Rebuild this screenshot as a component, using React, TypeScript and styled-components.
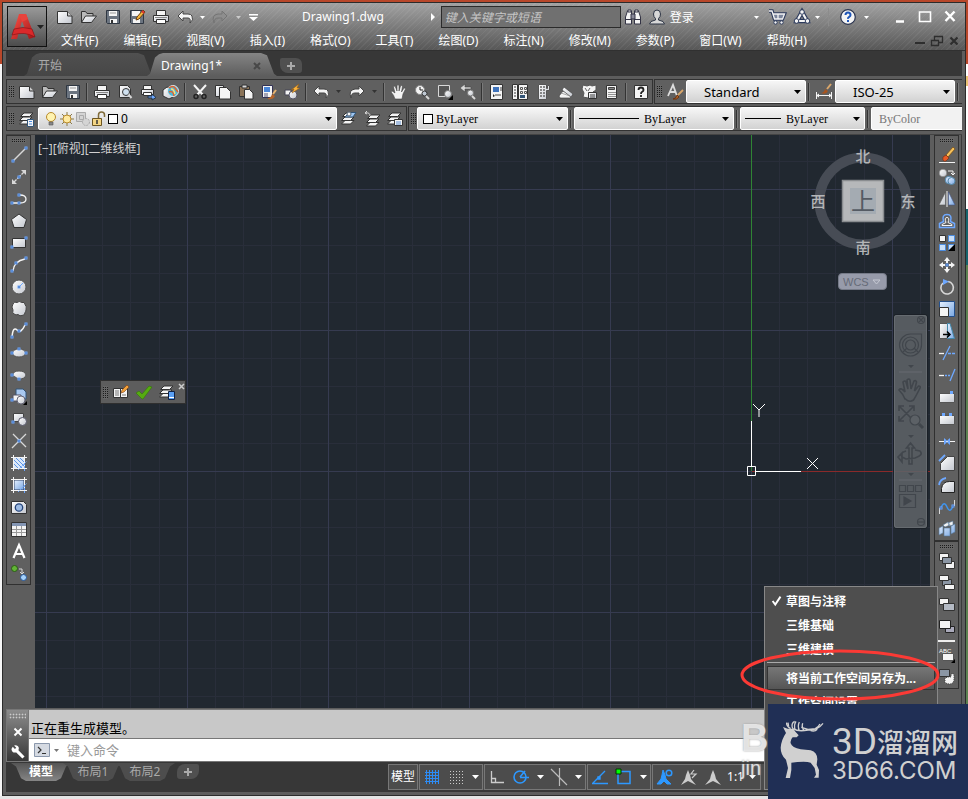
import React from "react";
import styled, { createGlobalStyle, css } from "styled-components";

const sans = `"Noto Sans", "Noto Sans CJK SC", sans-serif`;

const GlobalStyle = createGlobalStyle`
  *, *::before, *::after { box-sizing: border-box; }
  body { margin: 0; font-family: ${sans}; font-size: 12px; }
  button { margin: 0; padding: 0; border: 0; background: none; color: inherit; font: inherit; }
  input, select { margin: 0; font: inherit; }
  svg { display: block; flex: none; }
`;

/* ---------- drawing helpers ---------- */

const W = "#f4f4f4";
const L = "#d8d8d8";
const D = "#333";
const B = "#6ea8ff";
const G = "url(#face)";
const BG = "url(#blueFace)";

const Node = ({ x, y }: { x: number; y: number }) => (
  <rect x={x - 1} y={y - 1} width="2" height="2" fill="#24406e" stroke={B} />
);
const Stack = () => (
  <g fill={W} stroke={D}>
    <path d="M4 9.500h9l-3.500 3.500h-9z" />
    <path d="M4 6h9l-3.500 3.500h-9z" />
    <path d="M5 2h9l-3.500 3.500h-9z" />
  </g>
);

const icons: Record<string, React.ReactNode> = {
  new: <g><path d="M.5 2.500h10l4.500 4.500v7.500h-14.500z" fill={G} stroke={D} /><path d="M10.500 2.500v4.500h4.500" fill="#ccc" stroke={D} /></g>,
  open: <g stroke={D}><path d="M.5 13.500v-11h4l1.500 2h6v3" fill="#bbb" /><path d="M.5 13.500l4-6.500h11l-5 6.500z" fill={G} /></g>,
  save: <g><path d="M1.500 1.500h13v13h-12l-1-1z" fill="#6b7480" stroke="#2f3742" /><path d="M4 2h8v5H4zM5 10h7v4H5z" fill={W} /><path d="M6 11h2v3H6z" fill="#333" /><path d="M5 4h6" stroke="#999" /></g>,
  saveAs: <g><path d="M1.500 1.500h13v13h-12l-1-1z" fill="#6b7480" stroke="#2f3742" /><path d="M3 2h8v5H3zM4 10h7v4H4z" fill={W} /><path d="M7 11l1-3 6-7 2 2-6 7z" fill="#f5b63c" stroke="#6b3d10" /><path d="M13 2l2 2" stroke="#d33" strokeWidth="2" /></g>,
  print: <g stroke={D}><path d="M3.500 1.500h9v5h-9z" fill={W} /><path d="M.5 6.500h15v6h-15z" fill={G} /><path d="M3.500 10.500h9v4h-9z" fill="#fff" /><path d="M2 8.500h12" stroke="#888" /></g>,
  preview: <g><path d="M2.500 1.500h8l3 3v9h-11z" fill={G} stroke={D} /><circle cx="9" cy="8" r="3.500" fill="#cfe0ef" stroke={D} /><path d="M11.500 10.500l3 3.500" stroke={L} strokeWidth="2" /></g>,
  publish: <g stroke={D}><path d="M3.500 1.500h8v4h-8z" fill={W} /><path d="M1.500 5.500h12v5h-12z" fill={G} /><path d="M3.500 8.500h8v3h-8z" fill="#fff" /><path d="M8 12h4v-2l4 3.500-4 2.500v-2H8z" fill={B} stroke="#234" /></g>,
  globe: <g><path d="M0 6l4-3 6 2v8l-4 2-6-3z" fill={G} stroke={D} /><circle cx="10" cy="7" r="5.500" fill="#4db8d8" stroke="#e8e8e8" /><path d="M6 4q4-3 6 0t3 4M6 8q4-2 5 4" fill="none" stroke="#e2632f" strokeWidth="1.500" /><path d="M8 5q3 0 4 5" fill="none" stroke="#ffe070" strokeWidth="1.500" /></g>,
  cut: <g fill="none" strokeWidth="1.500"><path d="M2 1l9 10M14 1L5 11" stroke={W} strokeWidth="2" /><circle cx="4" cy="12.500" r="2" stroke="#222" /><circle cx="12" cy="12.500" r="2" stroke="#222" /></g>,
  copy: <g><path d="M.5 1.500h8v11h-8z" fill={G} stroke={D} /><path d="M4.500 3.500h7l4 4v7.500h-11z" fill={W} stroke={D} /></g>,
  paste: <g><path d="M1.500 2.500h10v10h-10z" fill="#8a7358" stroke={D} /><path d="M4 1h5v3H4z" fill={L} stroke={D} /><path d="M6.500 5.500h5l3.500 3.500v6h-8.500z" fill={W} stroke={D} /></g>,
  match: <g><path d="M1.500 1.500h10v12h-10z" fill={W} stroke="#335" /><path d="M3 3h6v5H3z" fill="#4a86d8" /><path d="M3 10h4M3 12h4" stroke="#557" /><path d="M7 14q3 0 4-4l3 2q-2 4-7 3z" fill="#b5652a" /><path d="M12 10l3-4" stroke="#e8b36e" strokeWidth="2" /></g>,
  block: <g><path d="M1 6h6v5H1z" fill={W} stroke="#445" /><circle cx="9" cy="11" r="4" fill={G} stroke="#556" /><path d="M7 6l8-6-2 4h3l-8 5 2-4z" fill="#f9b23c" stroke="#8a5510" strokeWidth=".5" /></g>,
  undo: <path d="M6 2L1 7l5 5V9h5q3 0 2 5 4-3 2-7-1-2-4-2H6z" fill={W} stroke="#444" />,
  redo: <path d="M10 2l5 5-5 5V9H6Q2 9 2 14q-3-8 4-9h4z" fill={W} stroke="#444" />,
  redoDim: <path d="M10 2l5 5-5 5V9H6Q2 9 2 14q-3-8 4-9h4z" fill="#8e8e8e" stroke="#747474" />,
  hand: <path d="M4 15Q3 11 0 8q1-2 4 1L2.500 3q1-1.500 2 0L6 7V1.500q1-1.500 2 0V7l1.500-5q1-1 2 .5L10.500 8 13 4q1.500-.5 1.500 1L12 10l-1 5z" fill={W} stroke="#444" strokeWidth=".6" />,
  zoomTime: <g><circle cx="6" cy="6" r="4.500" fill={W} stroke="#888" /><path d="M6 3v3h3" fill="none" stroke="#222" /><circle cx="10.500" cy="9.500" r="2.500" fill="#bfc8d2" stroke={D} /><path d="M12 12l3 3" stroke={L} strokeWidth="2" /></g>,
  zoomWin: <g><path d="M1.500 1.500h11v11h-11z" fill="#555" stroke={L} /><circle cx="11" cy="10" r="3.500" fill={G} stroke="#777" /><path d="M16 16v-5l-5 5z" fill="#000" /></g>,
  zoomPrev: <g><path d="M0 4l5-4v3h6v2H5v3z" fill={L} stroke="#444" strokeWidth=".6" /><circle cx="10.500" cy="9" r="3" fill={G} stroke="#777" /><path d="M12 12l3 3" stroke={L} strokeWidth="2" /></g>,
  props: <g><path d="M1.500.5h12v15h-12z" fill={W} stroke={D} /><path d="M4 3h6v5H4z" fill="#3f73bb" /><path d="M11 4h2M11 6h2M6 11h6" stroke="#444" /><path d="M4 10l2 2-2 1z" fill="#222" /></g>,
  design: <g><path d="M.5.5h5v15h-5zM6.500.5h9v15h-9z" fill={W} stroke={D} /><path d="M2 3h2M2 6h2M2 9h2M2 12h2" stroke="#777" strokeWidth="1.500" /><path d="M8.500 3.500h2v2h-2zM12.500 3.500h2v2h-2zM8.500 7.500h2v2h-2zM12.500 7.500h2v2h-2z" fill="none" stroke="#555" /><path d="M8 11h5v3H8z" fill="#357" /></g>,
  palette: <g><path d="M3.500.5h8v4h1v-3h2v5h-3v9h-8z" fill={G} stroke="#555" /><path d="M5 3h6M5 6h6M5 9h6M5 12h6" stroke="#666" strokeDasharray="2 1" strokeWidth="1.500" /></g>,
  sheets: <g stroke="#444" strokeWidth=".7"><path d="M1 12l4-5 10 4-3 3H2z" fill={W} /><path d="M4 6l2-3 9 7-2 3z" fill={G} /><path d="M3 9l9 3" stroke="#888" /></g>,
  markup: <g><path d="M1 5l1-4 4 1 3-1 2 1 4-1v5l-3 2-2 4-3 2-5-1 1-4z" fill={W} stroke="#555" /><path d="M4 4l2 3M9 4L7 7" stroke="#666" /><path d="M7.500 8.500h8v6h-8z" fill={G} stroke={D} /><path d="M9 11h5M9 13h5" stroke="#444" /></g>,
  calc: <g><path d="M2.500 1.500h10v13h-10z" fill={W} stroke={D} /><path d="M4.500 3.500h6v2h-6z" fill="#888" stroke="#444" /><path d="M4.500 8.500h7M4.500 10.500h7M4.500 12.500h7" stroke="#333" strokeDasharray="1 1" /></g>,
  help: <g><path d="M1.500 1.500h13v13h-13z" fill={W} stroke={D} /><path d="M5.500 6q0-2.500 2.500-2.500T10.500 6q0 1-1.300 1.800T8 10M8 11v2" fill="none" stroke="#222" strokeWidth="1.800" /></g>,
  layers: <g><Stack /><path d="M8.500 8.500h6v7h-6z" fill={W} stroke="#357" /><path d="M10 10h3v1h-3zM10 12.500h3v1h-3z" fill="#4a8ae0" /></g>,
  layerTop: <g><Stack /><path d="M6 4l3-2.500h6L12 6H4z" fill="#9cc4f0" stroke="#357" /><circle cx="8" cy="3" r="2" fill={W} stroke="#567" /></g>,
  layerPrev: <g transform="translate(2 2)"><Stack /><path d="M4 3Q4-1-1 0M-1 0l2-2M-1 0l2 1" fill="none" stroke={L} /></g>,
  layerState: <g><Stack /><path d="M7.500 8.500h8v6h-8z" fill={W} stroke={D} /><path d="M9 11h5M9 13h5" stroke="#5a8acc" /></g>,
  bulb: <g><circle cx="8" cy="6" r="4.500" fill="#fff3b0" stroke="#b98a2b" /><path d="M6 11h4v3H6z" fill="#888" stroke="#555" strokeWidth=".6" /></g>,
  sun: <g><path d="M8 1v14M1 8h14M3 3l10 10M13 3L3 13" stroke="#8a7a48" /><circle cx="8" cy="8" r="4" fill="#ffeaa0" stroke="#b98a2b" /></g>,
  freeze: <g fill="#d4d4d4" stroke="#aaa"><path d="M1.500 1.500h9v9h-9z" /><path d="M4.500 4.500h4v4h-4z" /><circle cx="11" cy="11" r="3.500" strokeDasharray="2 1" /></g>,
  lock: <g><path d="M7.500 8V4q0-3 3-3t3 3v2" fill="none" stroke="#806c3a" strokeWidth="1.500" /><path d="M1.500 7.500h9v7h-9z" fill="#f3d585" stroke="#6c5520" /><path d="M6 9v4" stroke="#333" strokeWidth="1.500" /></g>,
  textStyle: <g><path d="M1 12L6 1l4 11M3 8h6" fill="none" stroke="#ddd" strokeWidth="1.800" /><path d="M6 15q3 0 4-4l2 2q-2 3-6 2z" fill="#b5652a" stroke="#6b3310" /><path d="M11 11l5-5" stroke="#dba76a" strokeWidth="1.800" /></g>,
  dimStyle: <g><path d="M.5 8v7M15.500 8v7M1 11.500h14" stroke={W} /><path d="M0 11.500l3-2v4zM16 11.500l-3-2v4z" fill={W} /><path d="M5 9q3 0 4-4l3 2q-2 4-7 2z" fill="#a8541e" /><path d="M11 5l4-5" stroke="#dba76a" strokeWidth="2" /></g>,

  line: <g><path d="M2 14L14 2" stroke={L} strokeWidth="1.500" /><Node x={2} y={14} /><Node x={15} y={1} /></g>,
  xline: <g><path d="M2 14L14 2" stroke={L} strokeWidth="1.300" strokeDasharray="5 1" /><path d="M10 1h5v5zM1 10v5h5z" fill={L} /><Node x={8} y={8} /></g>,
  pline: <g><path d="M1 12h8q6 0 6-4t-6-4" fill="none" stroke={W} strokeWidth="1.300" /><Node x={1} y={12} /><Node x={8} y={12} /><Node x={8} y={4} /></g>,
  polygon: <path d="M8 1l7.500 5.500L13 14.500H3L.5 6.500z" fill={G} stroke={D} />,
  rectangle: <g><path d="M1.500 3.500h13v9h-13z" fill={G} stroke={D} /><Node x={1} y={12} /><Node x={15} y={3} /></g>,
  arc: <g><path d="M2 14Q3 4 14 2" fill="none" stroke={W} strokeWidth="1.300" /><Node x={1} y={14} /><Node x={5} y={6} /><Node x={15} y={1} /></g>,
  circle: <g><circle cx="8" cy="8" r="7" fill={G} stroke="#555" /><path d="M8 8l4-4" stroke={B} /><Node x={8} y={8} /></g>,
  cloud: <path d="M2 3q1-3 4-1.500Q8-.5 11 1.500q3-1 3 2 2 2 1 5 0 2-1 3 0 3-3 3-2 1-4-1-2 1-4-.5-2-1-1-4-2-3 0-6z" fill={G} stroke="#444" />,
  spline: <g><path d="M1 14Q2 3 6 7t8-5" fill="none" stroke={W} strokeWidth="1.500" /><Node x={1} y={14} /><Node x={8} y={8} /><Node x={15} y={1} /></g>,
  ellipse: <g><ellipse cx="8" cy="8" rx="6.500" ry="4" fill={G} stroke="#555" /><Node x={1} y={8} /><Node x={15} y={8} /><Node x={8} y={4} /></g>,
  ellipseArc: <g><path d="M2 8q0-4 6-4t7 4q-1 4-7 4" fill={G} stroke="#555" /><Node x={1} y={8} /><Node x={8} y={12} /></g>,
  insert: <g><path d="M5 0h7l3 3v7H5z" fill="#a9c8ef" stroke="#357" /><path d="M2 6h8v6H2z" fill={W} stroke="#556" /><circle cx="10" cy="11" r="4" fill={G} stroke="#667" /><path d="M16 16v-4l-4 4z" fill="#000" /><Node x={1} y={11} /></g>,
  makeBlock: <g><path d="M2.500 2.500h10v8h-10z" fill={G} stroke="#444" /><circle cx="11.500" cy="10.500" r="4" fill={G} stroke="#556" /><Node x={2} y={11} /></g>,
  point: <g><path d="M2 1l13 13M1 15L15 1" stroke={L} strokeWidth="1.300" /><Node x={8} y={8} /></g>,
  hatch: <g><path d="M3 3h10v10H3z" fill="#dbe8fa" /><path d="M3 9l4 4M3 5l8 8M5 3l8 8M9 3l4 4" stroke="#5c94e4" /><path d="M2.500 0v16M0 2.500h16M13.500 0v16M0 13.500h16" stroke={W} /><path d="M7 15l9-9M13.500 8v8" stroke={B} strokeDasharray="2 1" /></g>,
  gradient: <g><path d="M3 3h10v10H3z" fill={BG} stroke="#346" /><path d="M2.500 0v16M0 2.500h16M13.500 0v16M0 13.500h16" stroke={W} /><path d="M7 15l9-9M13.500 8v8" stroke={B} strokeDasharray="2 1" /></g>,
  region: <g><path d="M.5 2.500h12l3 3v9H.5z" fill={G} stroke="#333" /><circle cx="8" cy="8.500" r="3.700" fill="#9dbbe4" stroke="#26457a" strokeWidth="1.300" /></g>,
  table: <g><path d="M.5 1.500h15v14H.5z" fill={W} stroke={D} /><path d="M1 2h14v3H1z" fill="#8496b4" /><path d="M1 8.500h14M1 11.500h14M5.500 5v10M10.500 5v10" stroke="#999" /></g>,
  mtext: <path d="M2.500 15L8 2l5.500 13M4.500 11h7" fill="none" stroke="#fff" strokeWidth="2.200" />,
  addSel: <g><circle cx="3.500" cy="3.500" r="3" fill="#62b536" stroke="#2b5c15" /><circle cx="12.500" cy="12.500" r="3" fill="#a6d2fb" stroke="#27589c" /><path d="M8 4h3v5M9 7l2 2 2-2" fill="none" stroke={L} /></g>,

  erase: <g><path d="M0 15.500h16" stroke={W} /><path d="M7 8l7-8 2 2-7 8z" fill="#f6c15b" stroke="#744a10" strokeWidth=".7" /><path d="M4 10l3-2 3 3-3 3q-4 1-3-4z" fill="#e85b25" stroke="#6b2a10" strokeWidth=".6" /></g>,
  copyObj: <g><circle cx="4" cy="4" r="3.800" fill={G} stroke="#777" strokeWidth=".6" /><circle cx="10" cy="11" r="3.800" fill={BG} stroke="#58a" /><circle cx="12.500" cy="12" r="3.500" fill={BG} stroke="#58a" /><path d="M9 2h5v4M12 4l2 2 2-2" fill="none" stroke={W} /></g>,
  mirror: <g><path d="M6.500 1v13H0z" fill={G} stroke="#555" strokeWidth=".6" /><path d="M9.500 1v13H16z" fill={BG} stroke="#458" strokeWidth=".6" /><path d="M8 0v16" stroke={W} /></g>,
  offset: <g fill="none"><path d="M.5 14.500v-4l4-2q-2-7 3.500-7t3.500 7l4 2v4z" stroke={B} strokeWidth="1.500" /><path d="M3 12.500v-1l4-2q-2-5 1-5t1 5l4 2v1z" stroke={W} /></g>,
  array: <g><path d="M.5.5h6v6h-6z" fill={W} stroke="#333" /><path d="M9.500.5h6v6h-6zM.5 9.500h6v6h-6zM9.500 9.500h6v6h-6z" fill="#c9dff9" stroke="#4b8ce0" /><path d="M16 16V9l-7 7z" fill="#000" /></g>,
  move: <g fill={W}><path d="M8 0l3 4H9v2H7V4H5zM8 16l3-4H9v-2H7v2H5zM0 8l4-3v2h2v2H4v2zM16 8l-4-3v2h-2v2h2v2z" /><Node x={8} y={8} /></g>,
  rotate: <g fill="none"><path d="M9 2.500a6.300 6.300 0 1 1-5 1.500" stroke={L} strokeWidth="1.600" /><path d="M4 0l6 2.500L4 6z" fill={B} /></g>,
  scale: <g><path d="M.5.5h15v15H.5z" fill={BG} stroke="#24508c" /><path d="M.5 6.500h9v9h-9z" fill={W} stroke="#333" /></g>,
  stretch: <g><path d="M.5.5h8v15h-8z" fill={G} stroke="#555" /><path d="M8.500.5H11l4.500 15h-7z" fill={BG} stroke="#48a" /><path d="M4 11.500h7M8 8.500l3 3-3 3" fill="none" stroke="#000" strokeWidth="1.500" /></g>,
  trim: <g strokeWidth="1.300"><path d="M0 8.500h5" stroke={W} /><path d="M4 15L11 1" stroke={B} /><path d="M9 8.500h7" stroke={B} strokeDasharray="3 1" /></g>,
  extend: <g strokeWidth="1.300"><path d="M0 8.500h5" stroke={W} /><path d="M6 8.500h5" stroke={B} strokeDasharray="2 1" /><path d="M11 14l5-12" stroke={B} /></g>,
  breakAt: <g><path d="M.5 4.500h15v9H.5z" fill={G} stroke="#555" /><path d="M11 2h3v3h-3z" fill={B} /></g>,
  breakObj: <g><path d="M.5 4.500h15v9H.5z" fill={G} stroke="#555" /><path d="M3 2h3v3H3zM10 2h3v3h-3z" fill={B} /></g>,
  join: <g><path d="M0 8.500h16" stroke={W} /><path d="M5 5l4 3.500L5 12zM11 5L7 8.500l4 3.500z" fill={B} /></g>,
  chamfer: <g><path d="M1.500 15.500v-7l7-7h7v14z" fill={G} stroke="#444" /><path d="M0 6l6-6" stroke={B} strokeWidth="1.800" /></g>,
  fillet: <g><path d="M2.500 15.500v-4q1-7 8-7h5v11z" fill={G} stroke="#222" /><path d="M0 8Q1 2 7 1" fill="none" stroke={B} strokeWidth="1.800" /></g>,
  blend: <g fill="none"><path d="M.5 15V9M15.500 7V1" stroke={L} /><path d="M2 9q3-8 6-1t6-1" stroke="#3f93ec" strokeWidth="1.500" /><Node x={2} y={9} /><Node x={14} y={7} /></g>,
  explode: <g stroke="#579" strokeWidth=".6"><path d="M0 7l4-2v7l-4 2zM5 7h6v8H5zM12 5l4-2v8l-4 2z" fill={BG} /><path d="M4 4l5-3 2 3-5 2zM9 2l5-2v4l-4 1z" fill={W} /></g>,
  front: <g stroke="#333"><path d="M.5.5h9v7h-9zM6.500 8.500h9v7h-9z" fill={W} /><path d="M3.500 4.500h9v6h-9z" fill="#8b96a4" /></g>,
  back: <g stroke="#333"><path d="M3.500 4.500h9v6h-9z" fill="#8b96a4" /><path d="M.5.5h9v5h-9zM5.500 9.500h10v5h-10z" fill={W} /></g>,
  above: <g stroke="#333"><path d="M.5 1.500h9v6h-9z" fill={W} /><path d="M4.500 6.500h11v7h-11z" fill="#b4bac4" /></g>,
  under: <g stroke="#222"><path d="M6.500 7.500h9v6h-9z" fill="#aab" /><path d="M.5 1.500h11v8H.5z" fill={W} /></g>,
  textFront: <g><path d="M3.500 6.500h11v7h-11z" fill={W} stroke="#555" /><text x="0" y="6" fontFamily="Liberation Sans" fontSize="6" fill="#fff">ABC</text><path d="M16 16v-4l-4 4z" fill="#000" /></g>,
  hatchBack: <g><path d="M.5.5h10v7h-10z" fill="#8b96a4" stroke="#333" /><path d="M6 14V9l3-1h3V5h3v5q0 5-5 5z" fill={W} stroke="#444" strokeDasharray="1 1" /></g>,

  refEdit: <g><path d="M.5 4.500h7v9h-7zM7.500 4.500h7v9h-7z" fill={W} stroke="#333" /><path d="M2 7h4M2 9h4M2 11h4M9 11h4" stroke="#777" /><path d="M8 9l1-3 5-5 2 2-5 5z" fill="#f2a23b" stroke="#7a3c10" strokeWidth=".6" /></g>,
  check: <path d="M0 9l3-2 3 3 7-8 3 1-9 12H6z" fill="#55ab10" stroke="#2f7000" strokeWidth=".5" />,
  layerDoc: <g><Stack /><path d="M9.500 7.500h6v8h-6z" fill="#5aa0f5" stroke="#124" /><path d="M10 13.500h5" stroke="#fff" /></g>,

  binoculars: <g><path d="M.5 15V8l2-6h4v13zM9.500 15V2h4l2 6v7z" fill={W} stroke="#334" /><path d="M6 5h4v5H6z" fill="#889" stroke="#334" /><path d="M3 1h3v2H3zM10 1h3v2h-3z" fill={W} stroke="#334" /><path d="M1 10.500h5M10 10.500h5" stroke="#334" /></g>,
  user: <path d="M8 1q3.500 0 3.500 4 0 3-2 4.500v1.500q6 1 6 4H.5q0-3 6-4V9.500q-2-1.500-2-4.500 0-4 3.500-4z" fill={L} stroke="#2c3444" />,
  cart: <g fill="none"><path d="M0 2h3l2.500 8h8L15.500 5H4" stroke="#2c3a5c" strokeWidth="3.500" /><path d="M4 5h11l-2 5H5.500z" fill="#7b859c" /><path d="M0 2h3l2.500 8h8L15.500 5H4M9 5v5" stroke={W} strokeWidth="1.300" /><circle cx="6.500" cy="13.500" r="1.700" fill={W} stroke="#2c3a5c" /><circle cx="12.500" cy="13.500" r="1.700" fill={W} stroke="#2c3a5c" /></g>,
  cloudA: <g fill="none"><path d="M8 3L3 12h10z" stroke="#2c3a5c" strokeWidth="4.500" /><path d="M8 3L3 12h10z" stroke={W} strokeWidth="2.200" /><circle cx="8" cy="3" r="2.300" fill={W} stroke="#2c3a5c" /><circle cx="2.500" cy="12" r="2.300" fill={W} stroke="#2c3a5c" /><circle cx="13.500" cy="12" r="2.300" fill={W} stroke="#2c3a5c" /></g>,
  helpRound: <g><circle cx="8" cy="8" r="7.300" fill={W} stroke="#2a3450" strokeWidth="1.200" /><path d="M5.500 6q0-2.500 2.500-2.500T10.500 6q0 1-1.300 1.800T8 9.800M8 11v2" fill="none" stroke="#1f56b8" strokeWidth="2" /></g>,
  minimize: <path d="M4 12.500h8" stroke="#fff" strokeWidth="2.500" />,
  maximize: <path d="M2.500 3h11v9.500h-11z" fill="none" stroke="#fff" strokeWidth="1.600" />,
  close: <path d="M3.500 2.500l9 9.500M12.500 2.500l-9 9.500" stroke="#fff" strokeWidth="2.400" />,
  minimizeDoc: <path d="M3 10h10" stroke="#2e2e2e" strokeWidth="2" />,
  restoreDoc: <path d="M5.500 7V3.500h8v6H10M2.500 7.500h7v5h-7z" fill="none" stroke="#2e2e2e" strokeWidth="1.300" />,
  closeDoc: <path d="M4.500 4.500l7 7M11.500 4.500l-7 7" stroke="#2e2e2e" strokeWidth="2.200" />,
  x: <path d="M4 4l8 8M12 4l-8 8" stroke="currentColor" strokeWidth="2.200" />,
  plus: <path d="M8 4v8M4 8h8" stroke="currentColor" strokeWidth="2" />,
  wrench: <path d="M2 2l2.500 2.500L6 3 3.500.5Q8-.5 9 3.500L8.500 6l7 7-2.500 2.500-7-7Q1 9.500.5 4.500z" fill="#fff" />,
  prompt: <g><path d="M.5 1.500h15v13H.5z" fill="#d5dae2" stroke="#8b98ac" /><path d="M4 5l3 3-3 3M8 11.500h4" fill="none" stroke="#333" strokeWidth="1.200" /></g>,
  tick: <path d="M3 8l3 4L12 3" fill="none" stroke="#fff" strokeWidth="2.200" />,

  grid: <path d="M2.500 1v14M5.500 1v14M8.500 1v14M11.500 1v14M14.500 1v14M1 3.500h14M1 6.500h14M1 9.500h14M1 12.500h14" stroke="#2d8cf5" />,
  snap: <path d="M2 2.500h13M2 5.500h13M2 8.500h13M2 11.500h13M2 14.500h13" stroke="#ccc" strokeDasharray="1 2" />,
  ortho: <path d="M2.500 2v11.500H15M3 9.500h3.500v4" fill="none" stroke="#ccc" strokeWidth="1.300" />,
  polar: <g fill="none" stroke="#2d98ff" strokeWidth="1.600"><circle cx="7" cy="8" r="6" /><path d="M7 8.500h9M7 8l5-6" /></g>,
  iso: <path d="M8.500-1v18M0 0l16 16" stroke="#bbb" strokeWidth="1.200" />,
  track: <g stroke="#2d98ff" strokeWidth="1.400"><path d="M0 14.500h16M1 14L13 2" /><path d="M6 8h2v2H6z" fill="#2d98ff" /></g>,
  osnap: <g><path d="M2 2.500h12v12H2z" fill="none" stroke="#2d98ff" strokeWidth="1.500" /><path d="M0 0h5v5H0z" fill="#0f0" stroke="#030" /></g>,
  annoVis: <g fill="none" stroke="#2d98ff"><path d="M6 1l2 5 1 4 5 5H10l-3-3-3 3H0l4-5 1-4z" fill="#2d98ff" /><circle cx="12" cy="4" r="2.800" strokeWidth="1.500" /></g>,
  annoAuto: <g><path d="M7 1l2 5 1 4 5 6-8-4-7 4 4-6 1-4z" fill="#ccc" /><path d="M13 1l-3 4h5l-4 4" fill="none" stroke="#ccc" strokeWidth="1.200" /></g>,
  annoScale: <path d="M8 1l2 5 1 4 5 6-8-4-8 4 5-6 1-4z" fill="#ccc" />,
};

const Icon = ({ name, size = 16 }: { name: string; size?: number }) => (
  <svg width={size} height={size} viewBox="0 0 16 16" overflow="visible" aria-hidden="true">{icons[name]}</svg>
);
const Caret = ({ color = "#fff" }: { color?: string }) => (
  <svg width="7" height="4" viewBox="0 0 7 4" aria-hidden="true"><path d="M0 0h7L3.500 4z" fill={color} /></svg>
);
const SmallCaret = ({ color = "#fff" }: { color?: string }) => (
  <svg width="5" height="3" viewBox="0 0 5 3" aria-hidden="true"><path d="M0 0h5L2.500 3z" fill={color} /></svg>
);

const Paints = styled.svg`position: absolute;`;

/* ---------- shell ---------- */

const Desktop = styled.div`
  min-height: 100vh;
  padding: 2px 2px 3px;
  display: flex;
  background:
    linear-gradient(#e4e4e4, #e4e4e4) bottom / 100% 3px no-repeat,
    linear-gradient(#b8472a 64px, #fff 64px 76px, #eac273 76px 86px, #fff 86px 209px, #17636b 209px 265px, #5c8050 265px) right / 2px 100% no-repeat,
    linear-gradient(#b8472a 64px, #f6f6f6 64px) left / 2px 100% no-repeat,
    #b8472a;
`;
const Window = styled.main`
  position: relative;
  flex: 1;
  min-width: 0;
  display: flex;
  flex-direction: column;
  border: 1px solid #2b2b2b;
  background: #5d5d5d;
`;
const Header = styled.header`
  height: 48px;
  padding: 3px 3px 0 4px;
  display: flex;
  gap: 6px;
  border-bottom: 1px solid #303030;
  background:
    repeating-linear-gradient(135deg, rgba(255, 255, 255, 0.05) 0 1px, transparent 1px 4px),
    linear-gradient(#a2a2a2, #7c7c7c 50%, #575757);
  color: #fff;
`;
const AppButton = styled.button`
  width: 40px;
  height: 41px;
  display: flex;
  align-items: center;
  justify-content: center;
  gap: 1px;
  border: 1px solid #111;
  background: linear-gradient(#999, #4c4c4c);
`;
const HeaderRows = styled.div`flex: 1; min-width: 0; display: flex; flex-direction: column; gap: 4px;`;
const TitleRow = styled.div`height: 22px; display: flex; align-items: center;`;
const MenuRow = styled.div`height: 18px; display: flex; align-items: center; justify-content: space-between;`;
const MenuBar = styled.nav`display: flex; gap: 25px; padding-left: 8px;`;
const MenuLink = styled.button`font-size: 12px; line-height: 18px; white-space: nowrap;`;

const ToolButton = styled.button<{ $w?: number; $h?: number }>`
  flex: none;
  width: ${(p) => p.$w ?? 23}px;
  height: ${(p) => p.$h ?? 22}px;
  display: flex;
  align-items: center;
  justify-content: center;
`;
const Title = styled.h1`
  margin: 0 47px 0 40px;
  font-size: 12px;
  font-weight: 400;
  line-height: 18px;
  white-space: nowrap;
`;
const SearchInput = styled.input`
  width: 180px;
  height: 22px;
  margin: 0 1px 0 5px;
  padding: 0 3px;
  border: 1px solid #2b2b2b;
  background: #707070;
  color: #fff;
  font-style: italic;
  &::placeholder { color: #c6c6c6; opacity: 1; }
`;
const Login = styled.button`height: 22px; display: flex; align-items: center; gap: 5px; padding-left: 4px; white-space: nowrap;`;
const Spacer = styled.div`flex: 1;`;
const HeaderRule = styled.span`width: 1px; height: 18px; margin: 0 7px; background: #8c8c8c;`;
const WindowButtons = styled.div`display: flex; margin-left: 15px;`;

/* ---------- document tabs ---------- */

const TabStrip = styled.div`
  height: 25px;
  margin: 0 3px;
  padding: 2px 0 0 18px;
  display: flex;
  background: #373737;
`;
const FileTab = styled.div<{ $active?: boolean }>`
  width: 130px;
  margin-right: -7px;
  padding: 2px 12px 0 14px;
  display: flex;
  align-items: center;
  justify-content: space-between;
  clip-path: polygon(0 100%, 3px 90%, 8px 20%, 12px 5%, 16px 0, calc(100% - 16px) 0, calc(100% - 10px) 10%, calc(100% - 3px) 90%, 100% 100%);
  background: ${(p) => (p.$active ? "linear-gradient(#858585, #5d5d5d)" : "linear-gradient(#505050, #464646)")};
  color: ${(p) => (p.$active ? "#fff" : "#aaa")};
  button { line-height: 18px; }
`;
const AddTab = styled.button`
  width: 22px;
  height: 15px;
  margin: 5px 0 0 10px;
  display: grid;
  place-items: center;
  border-radius: 2px 6px 3px 8px;
  background: #505050;
  color: #aaa;
`;

/* ---------- toolbars ---------- */

const ToolbarRow = styled.div<{ $gap: number }>`
  height: 25px;
  margin: ${(p) => p.$gap}px 3px 0;
  display: flex;
  gap: 1px;
  overflow: hidden;
`;
const Toolbar = styled.div<{ $grow?: boolean }>`
  flex: ${(p) => (p.$grow ? "1 0 auto" : "none")};
  display: flex;
  align-items: center;
  border: 1px solid #323232;
  ${(p) => p.$grow && css`border-right: 0;`}
  background: #606060;
`;
const dots = css`
  background:
    repeating-linear-gradient(0deg, #666 0 1px, transparent 1px 2px) content-box,
    repeating-linear-gradient(90deg, #1c1c1c 0 1px, #666 1px 2px) content-box;
`;
const Grip = styled.span`
  flex: none;
  width: 8px;
  height: 13px;
  padding: 0 1px 0 2px;
  ${dots}
`;
const Rule = styled.span`
  flex: none;
  width: 2px;
  height: 18px;
  margin: 0 2px;
  border-left: 1px solid #333;
  border-right: 1px solid #7a7a7a;
`;
const Field = styled.label<{ $w: number; $off?: boolean }>`
  flex: none;
  width: ${(p) => p.$w}px;
  height: 23px;
  padding: 0 4px;
  display: flex;
  align-items: center;
  border: 1px solid #fff;
  border-radius: 2px;
  background: ${(p) => (p.$off ? "#f2f2f2" : "linear-gradient(#f6f6f6, #d2d2d2)")};
  color: ${(p) => (p.$off ? "#777" : "#000")};
`;
const Picker = styled.select<{ $serif?: boolean; $indent?: number; $size?: number }>`
  flex: 1;
  min-width: 0;
  padding: 0 0 0 ${(p) => p.$indent ?? 3}px;
  border: 0;
  appearance: none;
  background: none;
  color: inherit;
  font-size: ${(p) => p.$size ?? 12}px;
  font-family: ${(p) => (p.$serif ? `"Liberation Serif", serif` : sans)};
  opacity: 1;
`;
const Swatch = styled.span`width: 10px; height: 10px; margin-left: 1px; border: 1px solid #000; background: #fff;`;
const LineSample = styled.span<{ $w: number }>`width: ${(p) => p.$w}px; height: 1px; margin-right: 2px; background: #000;`;

const Workspace = styled.div`
  flex: 1;
  min-height: 0;
  margin: 3px 3px 0;
  display: flex;
  border-top: 1px solid #444;
`;
const Side = styled.aside<{ $right?: boolean }>`
  flex: none;
  padding: ${(p) => (p.$right ? "0 2px 0 4px" : "0 4px 0 0")};
  ${(p) => p.$right && css`border-right: 1px solid #3a3a3a;`}
`;
const VerticalBar = styled.div`
  width: 25px;
  display: flex;
  flex-direction: column;
  align-items: center;
  border: 1px solid #303030;
  background: #606060;
`;
const VerticalGrip = styled.span`
  width: 14px;
  height: 8px;
  padding: 2px 0 1px;
  ${dots}
`;
const BarRule = styled.span`width: 17px; height: 2px; margin: 2px 0; background: #eee;`;

/* ---------- canvas ---------- */

const Canvas = styled.section`
  position: relative;
  flex: 1;
  min-width: 0;
  overflow: hidden;
  background: #212830;
`;
const CanvasDrawing = styled.svg`position: absolute; inset: 0; width: 100%; height: 100%;`;
const ViewLabel = styled.div`
  position: absolute;
  left: 3px;
  top: 5px;
  color: #d0d0d0;
  font-size: 12px;
  line-height: 18px;
`;
const Compass = styled.div`position: absolute; right: 12px; top: 11px;`;
const WcsButton = styled.button`
  position: absolute;
  right: 43px;
  top: 138px;
  width: 49px;
  height: 17px;
  padding: 0 5px 0 4px;
  display: flex;
  align-items: center;
  justify-content: space-between;
  border: 1px solid #767b88;
  border-radius: 4px;
  background: #979baa;
  color: #666b78;
  font: 11px/14px "Liberation Sans", sans-serif;
`;
const NavBar = styled.div`
  position: absolute;
  right: 3px;
  top: 180px;
  width: 33px;
  height: 213px;
  border-radius: 3px;
  background: rgba(93, 98, 103, 0.88);
  box-shadow: inset 0 0 0 1px #666b70, 0 0 0 1px #1b2027;
`;
const FloatBar = styled.div`
  position: absolute;
  left: 65px;
  top: 245px;
  width: 86px;
  height: 24px;
  display: flex;
  align-items: center;
  border: 1px solid #2f2f2f;
  background: #5d5d5d;
`;
const FloatClose = styled.button`align-self: flex-start; width: 8px; margin-top: 2px; color: #ccc;`;

/* ---------- command line ---------- */

const Command = styled.section`
  height: 53px;
  margin: 1px 3px 0;
  display: flex;
  border: 1px solid #777;
`;
const CommandHandle = styled.div`
  width: 22px;
  padding: 3px 2px 2px;
  display: flex;
  flex-direction: column;
  align-items: center;
  justify-content: space-between;
  border-right: 1px solid #777;
  background: linear-gradient(#8c8c8c, #383838);
  color: #fff;
`;
const CommandGrip = styled.span`width: 17px; height: 6px; background: radial-gradient(circle, #ccc 40%, transparent 50%) 0 0 / 3px 3px;`;
const CommandBody = styled.div`flex: 1; display: flex; flex-direction: column;`;
const Log = styled.output`
  height: 29px;
  padding: 9px 2px 0;
  border-bottom: 1px solid #777;
  background: #c8c8c8;
  color: #000;
  font-size: 13px;
  line-height: 19px;
`;
const Prompt = styled.label`flex: 1; padding-left: 5px; display: flex; align-items: center; gap: 4px; background: #fff;`;
const PromptInput = styled.input`
  flex: 1;
  padding: 0 4px;
  border: 0;
  outline: 0;
  font-size: 13px;
  &::placeholder { color: #999; opacity: 1; }
`;

/* ---------- status bar ---------- */

const StatusBar = styled.footer`
  height: 30px;
  margin: 0 3px 3px;
  padding-left: 5px;
  display: flex;
  justify-content: space-between;
  background: #373737;
`;
const LayoutTabs = styled.nav`display: flex; padding-top: 1px;`;
const DocButtons = styled.div`display: flex;`;
const LayoutTab = styled.button<{ $active?: boolean }>`
  width: 60px;
  height: 18px;
  margin-right: -8px;
  clip-path: polygon(0 0, 100% 0, calc(100% - 5px) 20%, calc(100% - 10px) 85%, calc(100% - 15px) 100%, 15px 100%, 10px 85%, 5px 20%);
  background: ${(p) => (p.$active ? "linear-gradient(#555, #858585)" : "#4d4d4d")};
  color: ${(p) => (p.$active ? "#fff" : "#aaa")};
  font-weight: ${(p) => (p.$active ? 700 : 400)};
  line-height: 18px;
`;
const AddLayout = styled(AddTab)`margin: 1px 0 0 10px; border-radius: 8px 2px 8px 3px;`;
const Status = styled.div`
  flex: none;
  width: 574px;
  margin-top: 2px;
  height: 26px;
  display: flex;
  background: #4c4c4c;
`;
const StatusGroup = styled.div`
  display: flex;
  align-items: center;
  margin-right: 1px;
  border: 1px solid #777;
  color: #fff;
`;
const StatusText = styled.button`padding: 0 2px; line-height: 18px; white-space: nowrap;`;

/* ---------- overlays ---------- */

const WorkspaceMenu = styled.div`
  position: absolute;
  right: 27px;
  bottom: 5px;
  width: 174px;
  height: 204px;
  padding: 2px;
  border: 1px solid #888;
  background: #4e4e4e;
  color: #fff;
`;
const MenuItem = styled.button<{ $hot?: boolean }>`
  width: 100%;
  height: 24px;
  padding-left: 2px;
  display: grid;
  grid-template-columns: 16px auto;
  align-items: center;
  justify-content: start;
  border: 1px solid ${(p) => (p.$hot ? "#343434" : "transparent")};
  background: ${(p) => (p.$hot ? "linear-gradient(#777, #555)" : "none")};
  font-size: 12px;
  font-weight: 700;
  white-space: nowrap;
`;
const MenuSeparator = styled.hr`margin: 1px 0 3px; border: 0; border-top: 1px solid #aaa;`;
const Marker = styled.svg`position: absolute; right: 24px; bottom: 93px;`;
const Ghost = styled.div`
  position: absolute;
  right: 196px;
  bottom: 16px;
  width: 28px;
  color: rgba(240, 240, 240, 0.85);
  font: 700 38px/38px "Liberation Sans", sans-serif;
  text-shadow: 0 0 2px #999;
  span { display: block; font-size: 20px; line-height: 22px; font-weight: 400; }
`;
const Brand = styled.div`
  position: absolute;
  right: -3px;
  bottom: -4px;
  width: 200px;
  height: 95px;
  padding: 16px 10px 0 12px;
  display: flex;
  gap: 8px;
  background: #202f55;
  color: #d0d0d0;
`;
const BrandText = styled.div`padding-top: 4px; white-space: nowrap;`;
const BrandTop = styled.div`
  display: flex;
  align-items: center;
  height: 36px;
  font: 500 27px/36px "Noto Sans CJK SC", sans-serif;
  b { font: 400 37px/36px Roboto, sans-serif; }
`;
const BrandBottom = styled.div`font: 400 24px/22px Inter, sans-serif;`;

/* ---------- data ---------- */

const menus = ["文件(F)", "编辑(E)", "视图(V)", "插入(I)", "格式(O)", "工具(T)", "绘图(D)", "标注(N)", "修改(M)", "参数(P)", "窗口(W)", "帮助(H)"];
const standardTools = [
  "new", "open", "save", "|", "print", "preview", "publish", "globe", "|", "cut", "copy", "paste", "match", "block", "|",
  "undo", "v", "redo", "v", "|", "hand", "zoomTime", "zoomWin", "zoomPrev", "|", "props", "design", "palette", "sheets", "markup", "calc", "|", "help",
];
const drawTools = ["line", "xline", "pline", "polygon", "rectangle", "arc", "circle", "cloud", "spline", "ellipse", "ellipseArc", "insert", "makeBlock", "point", "hatch", "gradient", "region", "table", "mtext", "addSel"];
const modifyTools = ["erase", "copyObj", "mirror", "offset", "array", "move", "rotate", "scale", "stretch", "trim", "extend", "breakAt", "breakObj", "join", "chamfer", "fillet", "blend", "explode"];
const orderTools = ["front", "back", "above", "under", "|", "textFront", "hatchBack"];

const Tool = ({ name, w, h }: { name: string; w?: number; h?: number }) => (
  <ToolButton $w={w} $h={h} aria-label={name}><Icon name={name} /></ToolButton>
);
const Drop = ({ w = 13, color }: { w?: number; color?: string }) => (
  <ToolButton $w={w} aria-label="more"><SmallCaret color={color} /></ToolButton>
);
const StatusDrop = ({ w }: { w: number }) => (
  <ToolButton $w={w} aria-label="more"><Caret /></ToolButton>
);

const VerticalTools = ({ tools }: { tools: string[] }) => (
  <VerticalBar>
    <VerticalGrip />
    {tools.map((t, i) => (t === "|" ? <BarRule key={i} /> : <Tool key={i} name={t} />))}
  </VerticalBar>
);

const Drawing = () => (
  <CanvasDrawing>
    <defs>
      <pattern id="grid" x="11" y="54" width="141" height="141" patternUnits="userSpaceOnUse">
        <path d="M28.500 0v141M56.500 0v141M84.500 0v141M113.500 0v141M0 28.500h141M0 56.500h141M0 84.500h141M0 113.500h141" stroke="#292e3a" />
        <path d="M.5 0v141M0 .5h141" stroke="#363b50" />
      </pattern>
    </defs>
    <rect width="100%" height="100%" fill="url(#grid)" />
    <rect x="716" y="0" width="1" height="336" fill="#2f8434" />
    <rect x="717" y="336" width="100%" height="1" fill="#8a2a2a" />
    <g fill="none" stroke="#fff">
      <path d="M716.500 286v46M721 336.500h45M712.500 331.500h8v9h-8z" />
      <path d="M772 323l11 11M783 323l-11 11M718 269l6 6 6-6M724 275v7" />
    </g>
  </CanvasDrawing>
);

const ViewCube = () => (
  <Compass>
    <svg width="110" height="114" viewBox="0 0 110 114">
      <circle cx="55" cy="55" r="43.500" fill="none" stroke="#474c55" strokeWidth="10" />
      <g fill="#b4b6b8" fontFamily="Noto Sans CJK SC, sans-serif" fontSize="15" fontWeight="500" textAnchor="middle">
        <text x="55" y="16">北</text><text x="55" y="107">南</text><text x="10" y="61">西</text><text x="100" y="61">东</text>
      </g>
      <path d="M34.500 34.500h41v41h-41z" fill="#b6b8ba" stroke="#8a8d90" strokeWidth="1.500" />
      <path d="M42 42h26v26H42z" fill="#a4abb2" />
      <text x="55" y="64" fill="#555b64" fontFamily="Noto Sans CJK SC, sans-serif" fontSize="24" textAnchor="middle">上</text>
    </svg>
  </Compass>
);

const Navigation = () => (
  <NavBar>
    <svg width="33" height="213" viewBox="0 0 33 213" fill="none" stroke="#41464c" strokeWidth="1.200">
      <circle cx="27" cy="5" r="3.500" /><path d="M25 3l4 4M29 3l-4 4" />
      <path d="M16.500 19h11v11a11 11 0 1 1-11-11z" /><circle cx="16.500" cy="30" r="8" /><circle cx="16.500" cy="30" r="5" /><path d="M9 37l4-4M24 37l-4-4" />
      <path d="M5 57h23M5 165h23" stroke="#666b70" strokeWidth="1" />
      <path d="M14 50h6l-3 3zM14 120h6l-3 3zM14 158h6l-3 3z" fill="#41464c" stroke="none" />
      <path d="M11 84q-2-5-6-9 2-3 6 2l-2-10q2-2 3 0l2 7-1-9q2-2 3 0l1 9 3-8q2-1 2.500 1l-2 9 4-5q3 0 1 3-4 8-6 11-4 3-8-1z" strokeWidth="1.600" />
      <path d="M5 91l15 15M20 91L5 106M5 96v-5h5M15 91h5v5M5 101v5h5" strokeWidth="1.600" />
      <circle cx="21" cy="105" r="5" fill="#5c6166" /><path d="M25 109l4 4" strokeWidth="3" />
      <path d="M16.500 128l4 5h-2.500v16h-3v-16h-2.500zM12 136q-7 2-4 6l4 2 9-1q9-3 5-7l-5-1M8 138v9l-4-5z" strokeWidth="1.600" />
      <path d="M5.500 170.500h6v6h-6zM13.500 170.500h6v6h-6zM21.500 170.500h6v6h-6zM5.500 179.500h16v13h-16z" />
      <path d="M10 182l7 4-7 4z" fill="#41464c" />
      <circle cx="27" cy="207" r="3.500" /><path d="M24 207h6" />
    </svg>
  </NavBar>
);

const Deer = () => (
  <svg width="44" height="60" viewBox="48 66 132 180" aria-hidden="true">
    <path d="M57 87l14 5h18l4 8 11 12-6 6H86q-8 8-6 18 4 13 30 18l30 3q20 6 20 27l-2 16 7 16-1 23h-14l6-9-4-20-12-16q-12-5-40-2l-18 2v22l-4 24H65l7-30-6-25q-16-14-16-36 2-24 16-44z" fill="currentColor" />
    <path d="M80 92Q66 84 68 74M74 86l-2-12M86 92Q80 76 92 70M94 96q-6-14 2-26M88 92q14 10 44 4 28 2 45-20M106 98q-6-14 0-26M120 98q-8-10-4-22M112 88l20 6 22-2q10-6 14-14M140 98q12 4 20-4" fill="none" stroke="currentColor" strokeWidth="4" />
  </svg>
);

export default function App() {
  return (
    <Desktop>
      <GlobalStyle />
      <Paints width="0" height="0" aria-hidden="true">
        <defs>
          <linearGradient id="face" x2="1" y2="1"><stop stopColor="#fff" /><stop offset="1" stopColor="#c3c7cf" /></linearGradient>
          <linearGradient id="blueFace" x2="1" y2="1"><stop stopColor="#e7f1ff" /><stop offset="1" stopColor="#78a6e2" /></linearGradient>
          <linearGradient id="red" x2="1" y2="1"><stop stopColor="#ff5348" /><stop offset="1" stopColor="#9c1417" /></linearGradient>
        </defs>
      </Paints>
      <Window>
        <Header>
          <AppButton aria-label="AutoCAD">
            <svg width="25" height="30" viewBox="0 0 25 30">
              <path d="M0 27L8 2h7l9 23-6 2-7-18L6 27z" fill="url(#red)" />
              <path d="M3 17q9-3 18 0l3 8q-10-6-23-2z" fill="#d9292b" stroke="#7d1214" strokeWidth=".6" />
              <path d="M8 2h7l2 5-6 3z" fill="#e8433c" />
            </svg>
            <Caret color="#222" />
          </AppButton>
          <HeaderRows>
            <TitleRow>
              {["new", "open", "save", "saveAs", "print", "undo"].map((n) => <Tool key={n} name={n} w={24} />)}
              <Drop w={11} /><Tool name="redoDim" w={24} /><Drop w={12} color="#ccc" />
              <ToolButton $w={18} aria-label="customize">
                <svg width="9" height="7" viewBox="0 0 9 7"><path d="M0 0h9v1.500H0zM0 3h9L4.500 7z" fill="#fff" /></svg>
              </ToolButton>
              <Title>Drawing1.dwg</Title>
              <svg width="5" height="8" viewBox="0 0 5 8"><path d="M0 0l4 4-4 4z" fill="#fff" /></svg>
              <SearchInput aria-label="搜索" placeholder="键入关键字或短语" />
              <Tool name="binoculars" />
              <Login><Icon name="user" />登录</Login>
              <Spacer />
              <Drop w={14} /><Tool name="cart" w={28} /><Tool name="cloudA" w={22} /><Drop w={8} />
              <HeaderRule />
              <Tool name="helpRound" w={24} /><Drop w={12} />
              <WindowButtons>
                <Tool name="minimize" w={25} /><Tool name="maximize" w={25} /><Tool name="close" w={25} />
              </WindowButtons>
            </TitleRow>
            <MenuRow>
              <MenuBar>{menus.map((m) => <MenuLink key={m}>{m}</MenuLink>)}</MenuBar>
              <DocButtons>
                <Tool name="minimizeDoc" w={17} /><Tool name="restoreDoc" w={17} /><Tool name="closeDoc" w={17} />
              </DocButtons>
            </MenuRow>
          </HeaderRows>
        </Header>

        <TabStrip>
          <FileTab><button>开始</button></FileTab>
          <FileTab $active>
            <button>Drawing1*</button>
            <ToolButton $w={16} aria-label="close"><svg width="8" height="8" viewBox="0 0 8 8"><path d="M1 1l6 6M7 1L1 7" stroke="#484848" strokeWidth="2" /></svg></ToolButton>
          </FileTab>
          <AddTab aria-label="new tab"><Icon name="plus" /></AddTab>
        </TabStrip>

        <ToolbarRow $gap={3}>
          <Toolbar>
            <Grip />
            {standardTools.map((t, i) =>
              t === "|" ? <Rule key={i} /> : t === "v" ? <Drop key={i} color="#333" /> : <Tool key={i} name={t} />
            )}
          </Toolbar>
          <Toolbar $grow>
            <Grip />
            <Tool name="textStyle" />
            <Field $w={120}>
              <Picker aria-label="文字样式" $indent={13} $size={13}><option>Standard</option></Picker><Caret color="#000" />
            </Field>
            <Rule />
            <Tool name="dimStyle" />
            <Field $w={120}>
              <Picker aria-label="标注样式" $indent={13} $size={13}><option>ISO-25</option></Picker><Caret color="#000" />
            </Field>
            <Rule />
          </Toolbar>
        </ToolbarRow>

        <ToolbarRow $gap={2}>
          <Toolbar>
            <Grip />
            <Tool name="layers" />
            <Field $w={299}>
              <Icon name="bulb" /><Icon name="sun" /><Icon name="freeze" /><Icon name="lock" /><Swatch />
              <Picker aria-label="图层"><option>0</option></Picker><Caret color="#000" />
            </Field>
            <Tool name="layerTop" /><Tool name="layerPrev" /><Tool name="layerState" />
          </Toolbar>
          <Toolbar $grow>
            <Grip />
            <Field $w={151}>
              <Swatch />
              <Picker aria-label="颜色" $serif><option>ByLayer</option></Picker><Caret color="#000" />
            </Field>
            <Rule />
            <Field $w={160}>
              <LineSample $w={60} />
              <Picker aria-label="线型" $serif><option>ByLayer</option></Picker><Caret color="#000" />
            </Field>
            <Rule />
            <Field $w={125}>
              <LineSample $w={36} />
              <Picker aria-label="线宽" $serif><option>ByLayer</option></Picker><Caret color="#000" />
            </Field>
            <Rule />
            <Field $w={151} $off>
              <Picker aria-label="打印样式" $serif><option>ByColor</option></Picker>
            </Field>
          </Toolbar>
        </ToolbarRow>

        <Workspace>
          <Side><VerticalTools tools={drawTools} /></Side>
          <Canvas>
            <Drawing />
            <ViewLabel>[−][俯视][二维线框]</ViewLabel>
            <ViewCube />
            <WcsButton>WCS<svg width="9" height="6" viewBox="0 0 9 6"><path d="M1 1h7L4.500 5z" fill="none" stroke="#c5c8d2" /></svg></WcsButton>
            <Navigation />
            <FloatBar>
              <Grip />
              <Tool name="refEdit" /><Tool name="check" /><Tool name="layerDoc" />
              <FloatClose aria-label="close"><svg width="7" height="7" viewBox="0 0 7 7"><path d="M1 1l5 5M6 1L1 6" stroke="currentColor" strokeWidth="1.500" /></svg></FloatClose>
            </FloatBar>
          </Canvas>
          <Side $right>
            <VerticalTools tools={modifyTools} />
            <VerticalTools tools={orderTools} />
          </Side>
        </Workspace>

        <Command>
          <CommandHandle>
            <CommandGrip /><Icon name="x" size={14} /><Icon name="wrench" size={14} />
          </CommandHandle>
          <CommandBody>
            <Log>正在重生成模型。</Log>
            <Prompt><Icon name="prompt" /><SmallCaret color="#777" /><PromptInput aria-label="命令" placeholder="键入命令" /></Prompt>
          </CommandBody>
        </Command>

        <StatusBar>
          <LayoutTabs>
            <LayoutTab $active>模型</LayoutTab><LayoutTab>布局1</LayoutTab><LayoutTab>布局2</LayoutTab>
            <AddLayout aria-label="new layout"><Icon name="plus" /></AddLayout>
          </LayoutTabs>
          <Status>
            <StatusGroup><StatusText>模型</StatusText></StatusGroup>
            <StatusGroup><Tool name="grid" w={24} /><Tool name="snap" w={24} /><StatusDrop w={14} /></StatusGroup>
            <StatusGroup><Tool name="ortho" w={24} /><Tool name="polar" w={24} /><StatusDrop w={14} /><Tool name="iso" w={24} /><StatusDrop w={14} /></StatusGroup>
            <StatusGroup><Tool name="track" w={24} /><Tool name="osnap" w={24} /><StatusDrop w={14} /></StatusGroup>
            <StatusGroup><Tool name="annoVis" w={24} /><Tool name="annoAuto" w={24} /><Tool name="annoScale" w={24} /><StatusText>1:1</StatusText><StatusDrop w={14} /></StatusGroup>
          </Status>
        </StatusBar>

        <WorkspaceMenu role="menu">
          <MenuItem role="menuitem"><Icon name="tick" size={14} /><span>草图与注释</span></MenuItem>
          <MenuItem role="menuitem"><span /><span>三维基础</span></MenuItem>
          <MenuItem role="menuitem"><span /><span>三维建模</span></MenuItem>
          <MenuSeparator />
          <MenuItem role="menuitem" $hot><span /><span>将当前工作空间另存为...</span></MenuItem>
          <MenuItem role="menuitem"><span /><span>工作空间设置</span></MenuItem>
        </WorkspaceMenu>
        <Marker width="202" height="54" viewBox="0 0 202 54"><ellipse cx="101" cy="27" rx="98" ry="24" fill="none" stroke="#fb3a35" strokeWidth="3" /></Marker>
        <Ghost>B<span>jin</span></Ghost>
        <Brand>
          <Deer />
          <BrandText>
            <BrandTop><b>3D</b>溜溜网</BrandTop>
            <BrandBottom>3D66.COM</BrandBottom>
          </BrandText>
        </Brand>
      </Window>
    </Desktop>
  );
}
